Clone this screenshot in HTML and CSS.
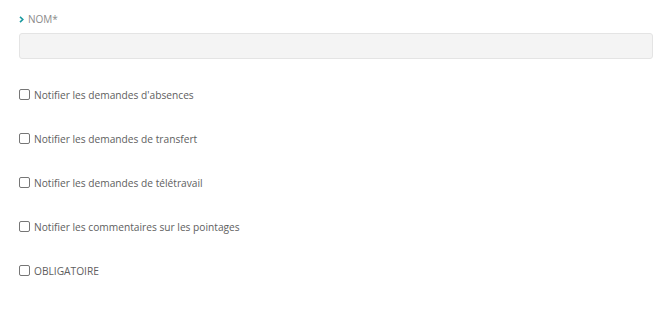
FILE: index.html
```html
<!DOCTYPE html>
<html lang="fr">
<head>
<meta charset="utf-8">
<link rel="stylesheet" href="styles.css">
</head>
<body>
<div class="form">
  <div class="field">
    <label class="field-label"><svg class="chev" width="5" height="7" viewBox="0 0 5 7"><path d="M1 0.8 L3.8 3.5 L1 6.2" fill="none" stroke="#1a9aa0" stroke-width="1.6"/></svg>NOM*</label>
    <input class="text-input" type="text">
  </div>
  <div class="checks">
    <label class="check"><span class="box"></span>Notifier les demandes d'absences</label>
    <label class="check"><span class="box"></span>Notifier les demandes de transfert</label>
    <label class="check"><span class="box"></span>Notifier les demandes de télétravail</label>
    <label class="check"><span class="box"></span>Notifier les commentaires sur les pointages</label>
    <label class="check"><span class="box"></span>OBLIGATOIRE</label>
  </div>
</div>
</body>
</html>
```
FILE: styles.css
```css
html, body {
  margin: 0;
  padding: 0;
  background: #fff;
  font-family: "Open Sans", "Liberation Sans", sans-serif;
}
.form {
  padding: 12px 17px 0 19px;
}
.field {
  display: flex;
  flex-direction: column;
}
.field-label {
  display: flex;
  align-items: center;
  font-size: 10px;
  color: #8a8a8a;
  height: 14px;
  line-height: 14px;
}
.chev {
  margin-right: 4px;
  margin-left: 0;
}
.text-input {
  margin-top: 7px;
  height: 26px;
  box-sizing: border-box;
  border: 1px solid #e4e4e4;
  border-radius: 3px;
  background: #f4f4f4;
  padding: 0 8px;
}
.checks {
  display: flex;
  flex-direction: column;
  gap: 29px;
  margin-top: 28px;
}
.check {
  display: flex;
  align-items: center;
  gap: 4px;
  font-size: 10.2px;
  color: #606060;
  height: 15px;
}
.box {
  width: 9px;
  height: 9px;
  border: 1px solid #767676;
  border-radius: 2px;
  flex: none;
}
```
